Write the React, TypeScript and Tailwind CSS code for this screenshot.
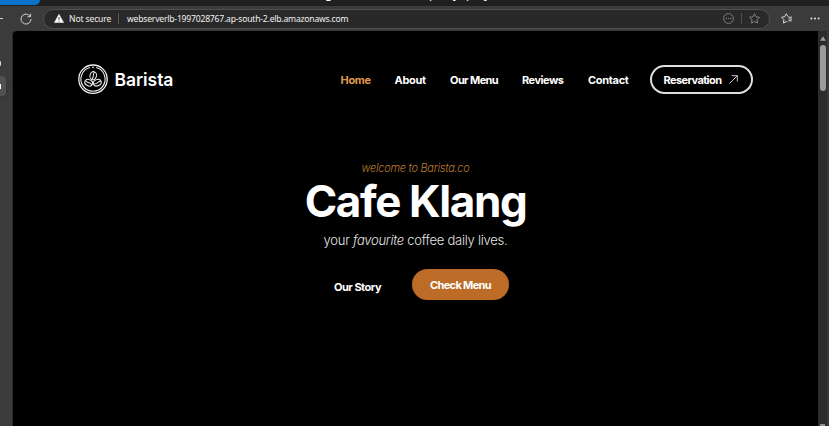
import React from "react";

const navItems = [
  { label: "Home", cls: "ml-[167px] w-[54px] text-[#e09a4e] tracking-[-0.3px]" },
  { label: "About", cls: "w-[55.5px] text-white tracking-[-0.3px]" },
  { label: "Our Menu", cls: "w-[72px] text-white tracking-[-0.6px]" },
  { label: "Reviews", cls: "w-[66px] text-white tracking-[-0.5px]" },
  { label: "Contact", cls: "w-[62.5px] text-white tracking-[-0.3px]" },
];

function Bean({ transform }: { transform: string }) {
  return (
    <g transform={transform}>
      <ellipse rx="3.5" ry="4.5" />
      <path d="M.8-4.3C-1.8-1.7 2 .7-.7 4.3" />
    </g>
  );
}

function Logo() {
  return (
    <svg className="size-[31px] shrink-0" viewBox="0 0 31 31" fill="none" stroke="#f1f1f1" strokeWidth="1.1">
      <circle cx="15" cy="15.2" r="14.2" strokeWidth="1.3" />
      <path d="M11.8 3.5a12.1 12.1 0 1 0 6.4 0M14 3.2h2" />
      <Bean transform="translate(15.2 11.7) rotate(12) scale(.92)" />
      <Bean transform="translate(10.7 18.7) rotate(-64) scale(.9)" />
      <Bean transform="translate(19.3 18.7) rotate(64) scale(.9)" />
    </svg>
  );
}

function TabStrip() {
  return (
    <div className="flex h-[6px] shrink-0 overflow-hidden bg-[#202020] text-[12px] leading-[14px] text-white">
      <div className="h-[5px] w-[40px] rounded-br-[6px] bg-[#0873c9]" />
      <span className="-mt-[13px] ml-[285px] w-[104px]">g</span>
      <span className="-mt-[13px] w-[24px]">p</span>
      <span className="-mt-[13px] w-[13px]">y</span>
      <span className="-mt-[13px] w-[18px]">p</span>
      <span className="-mt-[13px]">y</span>
    </div>
  );
}

function Toolbar() {
  return (
    <div className="flex h-[25px] shrink-0 items-center bg-[#3b3b3b]">
      <div className="h-px w-[3px] bg-[#c8c8c8]" />
      <svg className="ml-[17px] size-[12px]" viewBox="0 0 12 12" fill="none" stroke="#d0d0d0" strokeWidth="1">
        <path d="M10.3 3.5A5 5 0 1 0 11 6M10.6.7v3H7.5" />
      </svg>
      <div className="ml-[11px] flex h-[20px] w-[727px] items-center rounded-full border border-[#505050] bg-[#292929] text-[8.6px] text-[#f0f0f0]">
        <svg className="ml-[10px] h-[9px] w-[10px]" viewBox="0 0 10 9">
          <path d="M5 .3 9.6 8.6H.4Z" fill="#fff" stroke="#fff" strokeWidth=".5" strokeLinejoin="round" />
          <path d="M5 3v2.8M5 6.6v1" stroke="#292929" strokeWidth=".9" />
        </svg>
        <span className="ml-[5px] w-[49px] pt-[2px] whitespace-nowrap tracking-[-0.15px]">Not secure</span>
        <span className="h-[11px] w-px bg-[#5a5a5a]" />
        <span className="ml-[8px] w-[225px] pt-[2px] whitespace-nowrap tracking-[-0.21px]">webserverlb-1997028767.ap-south-2.elb.amazonaws.com</span>
        <svg className="ml-auto size-[11px]" viewBox="0 0 11 11" fill="none" stroke="#858585" strokeWidth=".9">
          <circle cx="5.5" cy="5.5" r="4.9" />
          <path d="M2.6 5.5h1.2M4.9 5.5h1.2M7.2 5.5h1.2" strokeWidth="1.2" />
        </svg>
        <span className="ml-[7px] h-[11px] w-px bg-[#505050]" />
        <svg className="mr-[9px] ml-[7px] size-[11px]" viewBox="0 0 11 11" fill="none" stroke="#8b8b8b" strokeWidth=".9" strokeLinejoin="round">
          <path d="m5.5.7 1.5 3.1 3.4.5L8 6.7l.5 3.4-3-1.6-3 1.6L3 6.7.6 4.3 4 3.8Z" />
        </svg>
      </div>
      <svg className="ml-[11px] h-[11px] w-[12px]" viewBox="0 0 12 11" fill="none" stroke="#dedede" strokeWidth=".95" strokeLinejoin="round">
        <path d="M7.4 3.4 6.7 3.2 5.2.8 3.8 3.7.6 4.2l2.3 2.4-.5 3.5 2.9-1.6 1 .5" />
        <path d="M7.4 4.2h3.6M7.4 6h3.6M7.4 7.8h3.4" />
      </svg>
      <svg className="ml-[17px] h-[3px] w-[10px]" viewBox="0 0 10 3" fill="#e6e6e6">
        <circle cx="1.4" cy="1.5" r="1" />
        <circle cx="5" cy="1.5" r="1" />
        <circle cx="8.6" cy="1.5" r="1" />
      </svg>
    </div>
  );
}

function Header() {
  return (
    <header className="mt-[33px] ml-[65px] flex h-[31px] items-center">
      <Logo />
      <span className="ml-[5.5px] w-[59px] pt-[2px] text-[17.5px] font-semibold tracking-[-0.05px] whitespace-nowrap text-white">Barista</span>
      <nav className="flex pt-[1px] text-[11px] font-bold whitespace-nowrap">
        {navItems.map((item) => (
          <a key={item.label} className={item.cls}>{item.label}</a>
        ))}
      </nav>
      <button className="-ml-px flex h-[29px] w-[103px] shrink-0 items-center rounded-full border-2 border-[#dedede] pl-[12px] text-[11px] font-bold tracking-[-0.6px] whitespace-nowrap text-white">
        <span className="w-[65px] pt-[1px] text-left">Reservation</span>
        <svg className="size-[9px] shrink-0" viewBox="0 0 9 9" fill="none" stroke="#e3d6e6" strokeWidth=".9">
          <path d="M.5 8.5 8.3.7M2.5.7h5.8v5.8" />
        </svg>
      </button>
    </header>
  );
}

function Hero() {
  return (
    <section className="flex flex-col items-center text-white">
      <p className="mt-[65px] h-[16px] text-[11px] leading-[16px] font-light tracking-[-0.28px] whitespace-nowrap text-[#bd7c32] italic">welcome to Barista.co</p>
      <h1 className="mt-[1px] h-[48px] text-[44px] leading-[48px] font-bold tracking-[-1.4px] whitespace-nowrap">Cafe Klang</h1>
      <p className="mt-[5px] h-[20px] text-[13px] leading-[20px] font-light tracking-[-0.25px] whitespace-nowrap text-[#e4e4e4]">
        your <em>favourite</em> coffee daily lives.
      </p>
      <div className="mt-[19px] ml-[12px] flex h-[31px] w-[175px] justify-between text-[11px] font-bold tracking-[-0.5px] whitespace-nowrap">
        <a className="mt-[10px] leading-[16px]">Our Story</a>
        <button className="h-[31px] w-[97px] rounded-full bg-[#bc6c27] pt-[1px] tracking-[-0.65px]">Check Menu</button>
      </div>
    </section>
  );
}

export default function App() {
  return (
    <div className="flex h-[426px] w-[829px] flex-col overflow-hidden bg-[#3b3b3b] font-['Noto_Sans','Open_Sans',sans-serif]">
      <TabStrip />
      <Toolbar />
      <div className="flex min-h-0 flex-1">
        <aside className="w-[13px] shrink-0 overflow-hidden border-r border-[#292929]">
          <div className="mt-[30px] h-[5px] w-[1px] rounded-r bg-[#d5d5d5]" />
          <div className="mt-[10px] flex h-[20px] w-[6px] items-center rounded-r-[4px] bg-[#505050] shadow">
            <div className="h-[5px] w-[1px] bg-white" />
          </div>
        </aside>
        <main className="w-[805px] shrink-0 overflow-hidden rounded-tl-[4px] bg-black font-['Inter',sans-serif]">
          <Header />
          <Hero />
        </main>
        <aside className="flex w-[9px] shrink-0 flex-col items-center bg-[#2c2c2c]">
          <svg className="mt-[5px] h-[5px] w-[6px]" viewBox="0 0 6 5"><path d="M3 .3 5.8 4.7H.2Z" fill="#a0a0a0" /></svg>
          <div className="mt-[4px] h-[46px] w-[6px] rounded-full bg-[#9b9b9b]" />
          <div className="mt-auto h-[2px] w-[5px] bg-[#929292]" />
        </aside>
        <div className="flex-1 bg-[#3b3b3b]" />
      </div>
    </div>
  );
}
